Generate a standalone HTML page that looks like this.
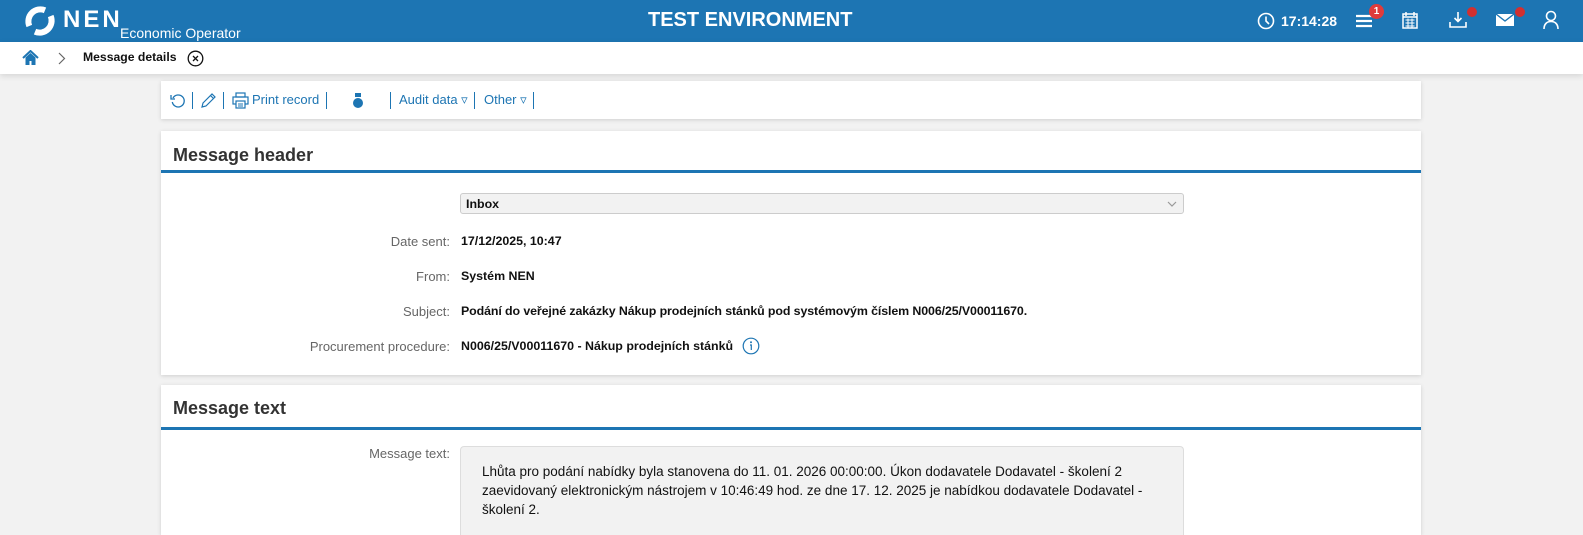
<!DOCTYPE html>
<html><head><meta charset="utf-8">
<style>
*{box-sizing:border-box;margin:0;padding:0}
html,body{width:1583px;height:535px;overflow:hidden}
body{background:#f2f2f2;font-family:"Liberation Sans",sans-serif;position:relative}
.top{position:absolute;left:0;top:0;width:1583px;height:42px;background:#1d75b3;color:#fff}
.bc{position:absolute;left:0;top:42px;width:1583px;height:32px;background:#fff;box-shadow:0 2px 6px rgba(0,0,0,.12)}
.card{position:absolute;left:161px;width:1260px;background:#fff;box-shadow:0 1px 4px rgba(0,0,0,.15)}
.t{position:absolute;font-size:13px;white-space:nowrap}
.lab{position:absolute;font-size:13px;color:#666;white-space:nowrap}
.val{position:absolute;left:461px;font-size:12.4px;font-weight:bold;color:#111;white-space:nowrap}
.h{position:absolute;left:12px;font-size:18px;font-weight:bold;color:#333}
.line{position:absolute;left:0;width:1260px;height:3px;background:#1d75b3}
.sep{position:absolute;top:11px;width:1px;height:17px;background:#1d75b3}
.tb{position:absolute;top:11px;font-size:13px;color:#1d75b3;white-space:nowrap}
</style></head><body>
<div class="top">
 <svg style="position:absolute;left:24px;top:5px" width="32" height="32" viewBox="0 0 32 32"><path d="M21 5.3A12 12 0 0 0 5.3 21" fill="none" stroke="#fff" stroke-width="6"/><path d="M11 26.7A12 12 0 0 0 26.7 11" fill="none" stroke="#fff" stroke-width="6"/></svg>
 <div class="t" style="left:63px;top:6px;font-size:24px;font-weight:bold;letter-spacing:3px">NEN</div>
 <div class="t" style="left:120px;top:25px;font-size:14px">Economic Operator</div>
 <div class="t" style="left:648px;top:9px;font-size:20px;font-weight:bold">TEST ENVIRONMENT</div>
 <svg style="position:absolute;left:1257px;top:12px" width="18" height="18" viewBox="0 0 18 18"><circle cx="9" cy="9" r="7.5" fill="none" stroke="#fff" stroke-width="1.6"/><path d="M9 4.5V9l3 3" fill="none" stroke="#fff" stroke-width="1.6"/></svg>
 <div class="t" style="left:1281px;top:13px;font-size:14px;font-weight:bold">17:14:28</div>
 <svg style="position:absolute;left:1355px;top:13px" width="18" height="16"><path d="M1 3h16M1 8h16M1 13h16" stroke="#fff" stroke-width="2.2"/></svg>
 <div style="position:absolute;left:1369px;top:4px;width:15px;height:15px;border-radius:50%;background:#e03b3b;color:#fff;font-size:10px;font-weight:bold;text-align:center;line-height:15px">1</div>
 <svg style="position:absolute;left:1402px;top:11px" width="16" height="18" viewBox="0 0 16 18"><rect x="1" y="3" width="14" height="14" fill="none" stroke="#fff" stroke-width="1.5"/><path d="M1 6h14M4 1v4M12 1v4" stroke="#fff" stroke-width="1.5"/><path d="M3.5 9h9M3.5 12h9M3.5 15h9M6 7.5v9M10 7.5v9" stroke="#fff" stroke-width="1"/></svg>
 <svg style="position:absolute;left:1449px;top:11px" width="18" height="18" viewBox="0 0 18 18"><path d="M9 1v9M5.5 7l3.5 3.5L12.5 7" fill="none" stroke="#fff" stroke-width="1.6"/><path d="M1 11v5h16v-5" fill="none" stroke="#fff" stroke-width="1.6"/></svg>
 <div style="position:absolute;left:1467px;top:7px;width:10px;height:10px;border-radius:50%;background:#d23030"></div>
 <svg style="position:absolute;left:1496px;top:13px" width="18" height="14" viewBox="0 0 18 14"><rect x="0" y="1" width="18" height="12" fill="#fff"/><path d="M0 1l9 7 9-7" fill="none" stroke="#1d75b3" stroke-width="1.3"/></svg>
 <div style="position:absolute;left:1515px;top:7px;width:10px;height:10px;border-radius:50%;background:#d23030"></div>
 <svg style="position:absolute;left:1543px;top:10px" width="16" height="20" viewBox="0 0 16 20"><circle cx="8" cy="6" r="4.5" fill="none" stroke="#fff" stroke-width="1.6"/><path d="M1 19c0-5 3-7.5 7-7.5s7 2.5 7 7.5" fill="none" stroke="#fff" stroke-width="1.6"/></svg>
</div>
<div class="bc">
 <svg style="position:absolute;left:22px;top:8px" width="17" height="16" viewBox="0 0 17 16"><path d="M1 8L8.5 1 16 8" fill="none" stroke="#1d75b3" stroke-width="2"/><path d="M3.5 7.5V15h4v-4h2v4h4V7.5L8.5 3z" fill="#1d75b3"/></svg>
 <svg style="position:absolute;left:58px;top:10px" width="8" height="13"><path d="M1 1l5.5 5.5L1 12" fill="none" stroke="#666" stroke-width="1.2"/></svg>
 <div class="t" style="left:83px;top:8px;font-weight:bold;color:#111;font-size:12.2px">Message details</div>
 <svg style="position:absolute;left:187px;top:8px" width="17" height="17" viewBox="0 0 17 17"><circle cx="8.5" cy="8.5" r="7.3" fill="none" stroke="#111" stroke-width="1.3"/><path d="M6 6l5 5M11 6l-5 5" stroke="#111" stroke-width="1.3"/></svg>
</div>
<div class="card" style="top:81px;height:38px">
 <svg style="position:absolute;left:9px;top:12px" width="16" height="16" viewBox="0 0 16 16"><path d="M3 5A6 6 0 1 1 2.3 9" fill="none" stroke="#1d75b3" stroke-width="1.3"/><path d="M1 2v4h4" fill="none" stroke="#1d75b3" stroke-width="1.3"/></svg>
 <div class="sep" style="left:31px"></div>
 <svg style="position:absolute;left:39px;top:11px" width="17" height="17" viewBox="0 0 17 17"><path d="M2 15l1-4L12 2l3 3-9 9z M10.5 3.5l3 3" fill="none" stroke="#1d75b3" stroke-width="1.2"/></svg>
 <div class="sep" style="left:62px"></div>
 <svg style="position:absolute;left:71px;top:11px" width="17" height="17" viewBox="0 0 17 17"><rect x="4" y="1" width="9" height="4" fill="none" stroke="#1d75b3" stroke-width="1.2"/><rect x="1" y="5" width="15" height="7" fill="none" stroke="#1d75b3" stroke-width="1.2"/><rect x="4" y="9" width="9" height="7" fill="#fff" stroke="#1d75b3" stroke-width="1.2"/><path d="M6 12h5M6 14h5" stroke="#1d75b3"/></svg>
 <div class="tb" style="left:91px">Print record</div>
 <div class="sep" style="left:165px"></div>
 <svg style="position:absolute;left:192px;top:12px" width="10" height="16" viewBox="0 0 10 16"><rect x="2" y="0" width="6" height="4" fill="#1d75b3"/><circle cx="5" cy="10" r="5" fill="#1d75b3"/></svg>
 <div class="sep" style="left:229px"></div>
 <div class="tb" style="left:238px">Audit data ▿</div>
 <div class="sep" style="left:313px"></div>
 <div class="tb" style="left:323px">Other ▿</div>
 <div class="sep" style="left:372px"></div>
</div>
<div class="card" style="top:131px;height:244px">
 <div class="h" style="top:14px">Message header</div>
 <div class="line" style="top:39px"></div>
 <div style="position:absolute;left:299px;top:62px;width:724px;height:21px;background:#f2f2f2;border:1px solid #ccc;border-radius:3px"><div class="t" style="left:5px;top:3px;font-weight:bold;color:#111;font-size:12.4px">Inbox</div><svg style="position:absolute;right:6px;top:7px" width="10" height="6"><path d="M1 1l4 4 4-4" fill="none" stroke="#999" stroke-width="1.2"/></svg></div>
</div>
<div class="lab" style="top:234px;right:1133px">Date sent:</div><div class="val" style="top:234px">17/12/2025, 10:47</div>
<div class="lab" style="top:269px;right:1133px">From:</div><div class="val" style="top:269px">Systém NEN</div>
<div class="lab" style="top:304px;right:1133px">Subject:</div><div class="val" style="top:304px;letter-spacing:-0.1px">Podání do veřejné zakázky Nákup prodejních stánků pod systémovým číslem N006/25/V00011670.</div>
<div class="lab" style="top:339px;right:1133px">Procurement procedure:</div><div class="val" style="top:339px">N006/25/V00011670 - Nákup prodejních stánků</div>
<svg style="position:absolute;left:742px;top:337px" width="18" height="18" viewBox="0 0 18 18"><circle cx="9" cy="9" r="7.8" fill="none" stroke="#1d75b3" stroke-width="1.2"/><circle cx="9" cy="5.3" r="1" fill="#1d75b3"/><path d="M8 8h1.3v5" fill="none" stroke="#1d75b3" stroke-width="1.2"/></svg>
<div class="card" style="top:385px;height:150px">
 <div class="h" style="top:13px">Message text</div>
 <div class="line" style="top:42px"></div>
 <div style="position:absolute;left:299px;top:61px;width:724px;height:89px;background:#f2f2f2;border:1px solid #ddd;border-bottom:none;border-radius:4px 4px 0 0">
  <div style="position:absolute;left:21px;top:15px;width:680px;font-size:13.5px;line-height:19px;color:#111">Lhůta pro podání nabídky byla stanovena do 11. 01. 2026 00:00:00. Úkon dodavatele Dodavatel - školení 2 zaevidovaný elektronickým nástrojem v 10:46:49 hod. ze dne 17. 12. 2025 je nabídkou dodavatele Dodavatel - školení 2.</div>
 </div>
</div>
<div class="lab" style="top:446px;right:1133px">Message text:</div>
</body></html>
